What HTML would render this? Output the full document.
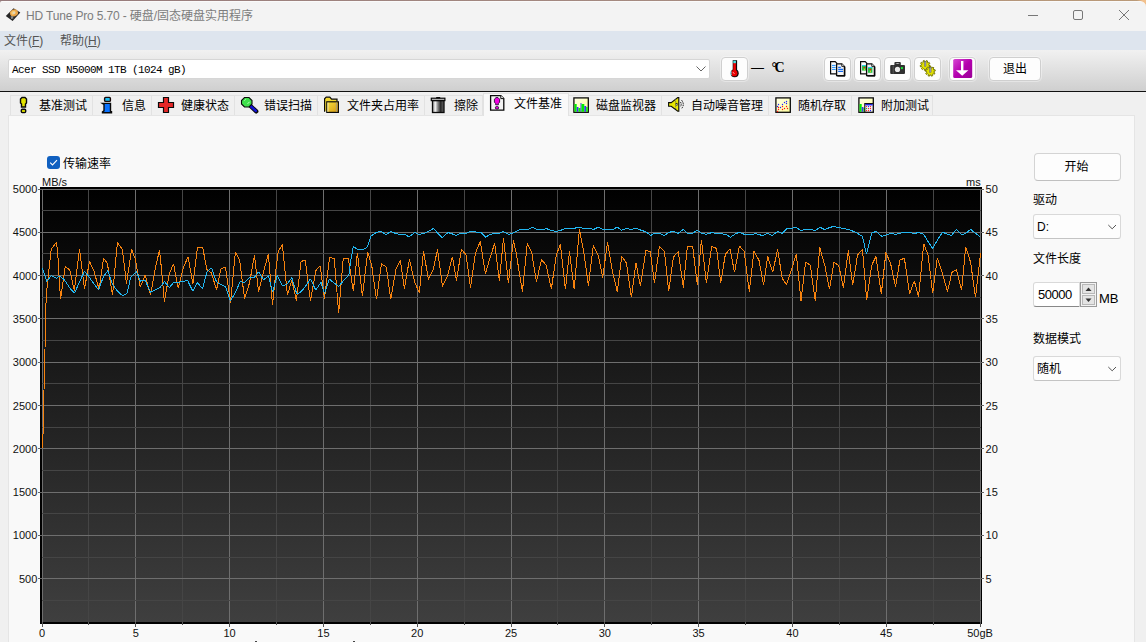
<!DOCTYPE html>
<html lang="zh-CN">
<head>
<meta charset="utf-8">
<title>HD Tune Pro 5.70 - 硬盘/固态硬盘实用程序</title>
<style>
*{box-sizing:border-box;margin:0;padding:0}
html,body{width:1146px;height:642px;overflow:hidden;background:#f0f0f0}
body{position:relative;font-family:"Liberation Sans","Noto Sans CJK SC",sans-serif;font-size:12px;color:#000}
.abs{position:absolute}
#topedge{left:0;top:0;width:1146px;height:8px;background:linear-gradient(to right,#957a7c,#a68b80 60%,#ba9a78 99.2%,#f2c08c 99.7%)}
#titlebar{left:0;top:1px;width:1146px;height:30px;background:#f3f3f3;border-top:1px solid #fafafa;border-radius:2px 6px 0 0}
#title{left:26px;top:8px;font-size:12px;line-height:16px;color:#7d7d7d;white-space:nowrap}
#menubar{left:0;top:31px;width:1146px;height:19px;background:#dee5ee}
.menu{top:33px;line-height:16px;color:#555;white-space:nowrap}
#toolbar{left:0;top:50px;width:1146px;height:41px;background:linear-gradient(#f1f1f1,#cfcfcf)}
#tbline{left:0;top:91px;width:1146px;height:1px;background:#111}
#combo{left:8px;top:59px;width:702px;height:20px;background:#fff;border:1px solid #d6d6d6;border-radius:2px}
#combotext{left:12px;top:63px;font-family:"Liberation Mono",monospace;font-size:11px;line-height:14px;letter-spacing:-0.6px;white-space:nowrap}
.tbtn{top:57px;width:27px;height:24px;background:#fdfdfd;border:1px solid #cfcfcf;border-radius:4px;box-shadow:0 0 0 1px rgba(255,255,255,.35)}
.tab{top:95px;height:21px;border:1px solid #e2e2e2;border-bottom:none;border-left:none;background:#f0f0f0;white-space:nowrap}
.tab span{position:absolute;top:2px;line-height:16px;font-size:12px}
.tab svg{position:absolute;top:2px}
.tab.sel{top:93px;height:23px;background:#f9f9f9;border-left:1px solid #e2e2e2}
.tab.sel span{top:2px}
#panel{left:8px;top:115px;width:1127px;height:530px;background:#f9f9f9;border:1px solid #e5e5e5}
.lbl{white-space:nowrap;line-height:14px;font-size:12px}
.sel2{left:1033px;width:88px;height:25px;background:#fdfdfd;border:1px solid #d9d9d9;border-bottom-color:#c4c4c4;border-radius:3px}
</style>
</head>
<body>
<div id="topedge" class="abs"></div>
<div id="titlebar" class="abs"></div>
<svg class="abs" style="left:0;top:0" width="30" height="30" viewBox="0 0 30 30">
<polygon points="13.6,8.2 20.3,12.4 12.6,21 5.8,16.1" fill="#262626"/>
<ellipse cx="14" cy="12.900" rx="4.100" ry="3.400" fill="#eaa548" transform="rotate(-25 14 12.900)"/>
<ellipse cx="13.600" cy="12.500" rx="2.300" ry="1.800" fill="#f6cf7c" transform="rotate(-25 14 12.900)"/>
<circle cx="14" cy="12.900" r=".9" fill="#d8d8d8"/>
<polygon points="10.600,16.600 13,16 13.400,18.600 11.200,19" fill="#8c8c8c"/>
</svg>
<div id="title" class="abs"><span style="letter-spacing:-0.16px">HD Tune Pro 5.70 - </span>硬盘/固态硬盘实用程序</div>
<svg class="abs" style="left:1020px;top:5px" width="120" height="22" viewBox="0 0 120 22" fill="none" stroke="#777" stroke-width="1">
<line x1="8" y1="10.5" x2="18" y2="10.5"/>
<rect x="53.5" y="5.5" width="9" height="9" rx="1.5"/>
<path d="M99 5 L109 15 M109 5 L99 15"/>
</svg>
<div id="menubar" class="abs"></div>
<div class="abs menu" style="left:4px">文件(<u>F</u>)</div>
<div class="abs menu" style="left:60px">帮助(<u>H</u>)</div>
<div id="toolbar" class="abs"></div>
<div id="tbline" class="abs"></div>
<div id="combo" class="abs"></div>
<div id="combotext" class="abs">Acer SSD N5000M 1TB (1024 gB)</div>
<svg class="abs" style="left:695px;top:65px" width="12" height="8" viewBox="0 0 12 8" fill="none" stroke="#666" stroke-width="1"><path d="M1.5 1.5 L6 6 L10.5 1.5"/></svg>

<!-- toolbar buttons -->
<div class="abs tbtn" style="left:721px"></div>
<div class="abs lbl" style="left:751px;top:61px;font-size:13px">— </div>
<div class="abs lbl" style="left:771.5px;top:60.5px;font-family:'Liberation Serif',serif;font-size:14px;font-weight:bold;letter-spacing:-2.6px">°C</div>
<div class="abs tbtn" style="left:824px"></div>
<div class="abs tbtn" style="left:854px"></div>
<div class="abs tbtn" style="left:884px"></div>
<div class="abs tbtn" style="left:914px"></div>
<div class="abs tbtn" style="left:949px"></div>
<div class="abs tbtn" style="left:989px;width:52px;text-align:center;line-height:22px;font-size:12px">退出</div>

<!-- tabs -->
<div class="abs tab" style="left:10px;width:83px;border-left:1px solid #e2e2e2"><span style="left:28px">基准测试</span></div>
<div class="abs tab" style="left:93px;width:59px"><span style="left:29px">信息</span></div>
<div class="abs tab" style="left:152px;width:83px"><span style="left:29px">健康状态</span></div>
<div class="abs tab" style="left:235px;width:83px"><span style="left:29px">错误扫描</span></div>
<div class="abs tab" style="left:318px;width:107px"><span style="left:29px">文件夹占用率</span></div>
<div class="abs tab" style="left:425px;width:58px"><span style="left:29px">擦除</span></div>
<div class="abs tab" style="left:569px;width:93px"><span style="left:27px">磁盘监视器</span></div>
<div class="abs tab" style="left:662px;width:107px"><span style="left:29px">自动噪音管理</span></div>
<div class="abs tab" style="left:769px;width:83px"><span style="left:29px">随机存取</span></div>
<div class="abs tab" style="left:852px;width:81px"><span style="left:29px">附加测试</span></div>
<div id="panel" class="abs"></div>
<div class="abs tab sel" style="left:483px;width:86px"><span style="left:30px">文件基准</span></div>

<svg class="abs" style="left:0;top:0" width="1146" height="130" viewBox="0 0 1146 130">
<defs>
<linearGradient id="gY" x1="0" y1="0" x2="1" y2="1"><stop offset="0" stop-color="#f6e040"/><stop offset="1" stop-color="#d89a10"/></linearGradient>
<linearGradient id="gT" x1="0" y1="0" x2="1" y2="0"><stop offset="0" stop-color="#8a8a8a"/><stop offset=".25" stop-color="#f2f2f2"/><stop offset=".45" stop-color="#8c8c8c"/><stop offset=".7" stop-color="#2a2a2a"/><stop offset="1" stop-color="#6a6a6a"/></linearGradient>
<linearGradient id="gM" x1="0" y1="0" x2="1" y2="1"><stop offset="0" stop-color="#d848d4"/><stop offset=".5" stop-color="#b400ae"/><stop offset="1" stop-color="#9a0096"/></linearGradient>
<linearGradient id="gP" x1="0" y1="0" x2="1" y2="1"><stop offset="0" stop-color="#ffffe8"/><stop offset="1" stop-color="#ffff9a"/></linearGradient>
</defs>
<!-- tab 1: exclamation -->
<path d="M22 97.5 h3 l1.5 1.5 v4 l-1 1 v3 h-4 v-3 l-1 -1 v-4 z" fill="#e2e200" stroke="#0a0a0a" stroke-width="1.400"/>
<rect x="21.3" y="109.3" width="4.4" height="3.3" rx="1" fill="#d0d000" stroke="#0a0a0a" stroke-width="1.400"/>
<!-- tab 2: info -->
<rect x="104.6" y="97.4" width="5.8" height="4" rx="1" fill="#1cc0f4" stroke="#1a0a0a" stroke-width="1.400"/>
<path d="M103.5 103.4 h7 v8.4 h1 v1 h-9 v-1 l1.5 -1 v-6.4 l-1.5 -1 z" fill="#0a72ff" stroke="#0a0a0a" stroke-width="1.400"/>
<!-- tab 3: red cross -->
<path d="M163.5 97.5 h5 v5 h5 v5 h-5 v5 h-5 v-5 h-5 v-5 h5 z" fill="#e52828" stroke="#0a0a0a" stroke-width="1.2"/>
<!-- tab 4: magnifier -->
<path d="M250 105.5 L256.3 111.4" stroke="#0a0a0a" stroke-width="4.2" stroke-linecap="round"/>
<path d="M250.5 106 L255.8 110.9" stroke="#1414d8" stroke-width="2.4" stroke-linecap="round"/>
<path d="M244.5 97.5 h4.5 l3 3 v3.5 l-3 3 h-4.5 l-3 -3 v-3.5 z" fill="#3ee04a" stroke="#0a0a0a" stroke-width="1.1"/>
<path d="M244.5 100.6 l1.2 -1.2 M247.6 103.8 l2 -2" stroke="#d8ffd8" stroke-width="0.9"/>
<!-- tab 5: folder -->
<path d="M324.6 111.8 v-13 l1.6 -1.6 h3.6 l1.8 2 h5.4 v2.3" fill="#f2d830" stroke="#0a0a0a" stroke-width="1.2"/>
<rect x="326.8" y="101.8" width="11.6" height="10.6" fill="url(#gY)" stroke="#0a0a0a" stroke-width="1.2"/>
<line x1="327.9" y1="102.6" x2="327.9" y2="111.8" stroke="#fff8c0" stroke-width="0.9"/>
<line x1="336.4" y1="102.6" x2="336.4" y2="111.8" stroke="#a09880" stroke-width="0.9"/>
<!-- tab 6: trash -->
<rect x="432.5" y="100.5" width="11.5" height="12" fill="url(#gT)" stroke="#0a0a0a" stroke-width="1.3"/>
<rect x="431.3" y="98.2" width="13.6" height="2.4" fill="#b0b0b0" stroke="#0a0a0a" stroke-width="1.2"/>
<rect x="436.2" y="97" width="4" height="1.4" fill="#0a0a0a"/>
<!-- tab 7: doc with ! -->
<path d="M490.6 95.6 h10.2 l3 3 v11.6 h-13.2 z" fill="#f4f4f4" stroke="#0a0a0a" stroke-width="1.3"/>
<path d="M500.8 95.6 v3 h3" fill="#fff" stroke="#0a0a0a" stroke-width="1"/>
<path d="M496 97.6 h2 l1.6 1.6 v3 l-1.2 1.2 v1.4 h-2.8 v-1.4 l-1.2 -1.2 v-3 z" fill="#f000e0" stroke="#201030" stroke-width="0.9"/>
<rect x="495.4" y="106.6" width="3.2" height="2.4" rx="1" fill="#f000e0" stroke="#201030" stroke-width="0.9"/>
<!-- tab 8: monitor -->
<rect x="573.9" y="97.9" width="14.4" height="14.4" fill="url(#gP)" stroke="#0a0a0a" stroke-width="1.3"/>
<rect x="574.5" y="104" width="2.2" height="7.7" fill="#00f000"/>
<rect x="576.7" y="107" width="1.8" height="4.7" fill="#3838f0"/>
<rect x="578.5" y="108" width="2" height="3.7" fill="#00f000"/>
<rect x="580.5" y="103" width="1" height="8.7" fill="#3838f0"/>
<rect x="581.5" y="104" width="2.8" height="7.7" fill="#00f000"/>
<rect x="584.3" y="106" width="1.9" height="5.7" fill="#3838f0"/>
<rect x="586.2" y="107" width="1.5" height="4.7" fill="#00f000"/>
<!-- tab 9: speaker -->
<path d="M668.6 102.6 h2.6 l6.6 -5 h1 v13.6 h-1 l-6.6 -5 h-2.6 z" fill="#e6e600" stroke="#0a0a0a" stroke-width="1.1"/>
<path d="M675.6 99 v10" stroke="#555" stroke-width="0.8" stroke-dasharray="1.2 1"/>
<rect x="676" y="103.2" width="1.2" height="2.4" fill="#ddd" stroke="#111" stroke-width="0.5"/>
<path d="M680.4 102 q1.6 2.3 0 4.8 M681.6 100.2 q3.4 4.2 0 8.4" fill="none" stroke="#0a0a0a" stroke-width="1" stroke-dasharray="1.5 0.9"/>
<!-- tab 10: scatter -->
<rect x="775.9" y="97.9" width="14.4" height="14.4" fill="url(#gP)" stroke="#0a0a0a" stroke-width="1.3"/>
<g fill="#2020ff"><circle cx="778.5" cy="104.5" r=".7"/><circle cx="777.5" cy="106.5" r=".7"/><circle cx="780.5" cy="107.5" r=".7"/><circle cx="782.5" cy="104.5" r=".7"/><circle cx="784.5" cy="102.5" r=".7"/><circle cx="786.5" cy="101.5" r=".7"/><circle cx="786.5" cy="103.5" r=".7"/></g>
<g fill="#ff1010"><circle cx="778.5" cy="107.5" r=".7"/><circle cx="778.5" cy="109.5" r=".7"/><circle cx="777.5" cy="111.5" r=".7"/><circle cx="782.5" cy="106.5" r=".7"/><circle cx="782.5" cy="109.5" r=".7"/><circle cx="784.5" cy="108.5" r=".7"/><circle cx="786.5" cy="106.5" r=".7"/><circle cx="787.5" cy="108.5" r=".7"/></g>
<!-- tab 11: extra -->
<rect x="858.9" y="97.9" width="14.4" height="14.4" fill="url(#gP)" stroke="#0a0a0a" stroke-width="1.3"/>
<rect x="859.5" y="104" width="2.2" height="7.7" fill="#00f000"/>
<rect x="861.7" y="107" width="1.8" height="4.7" fill="#3838f0"/>
<rect x="863.5" y="108" width="1.2" height="3.7" fill="#00f000"/>
<rect x="864.8" y="103.6" width="8.4" height="8.6" fill="#f4f4f4" stroke="#0a0a0a" stroke-width="1.1"/>
<rect x="865.3" y="104.1" width="7.4" height="1.3" fill="#1010e0"/>
<g fill="#ff1010"><circle cx="866.5" cy="106.6" r=".65"/><circle cx="870.5" cy="106.6" r=".65"/><circle cx="868.5" cy="108.6" r=".65"/><circle cx="870.5" cy="108.6" r=".65"/><circle cx="866.5" cy="110.6" r=".65"/><circle cx="868.5" cy="110.6" r=".65"/></g>
<g fill="#1010ff"><circle cx="868.5" cy="106.6" r=".65"/><circle cx="870.5" cy="110.6" r=".65"/></g>
<circle cx="866.5" cy="108.6" r=".65" fill="#10a020"/>

<!-- toolbar: thermometer -->
<rect x="732.7" y="60.2" width="4.400" height="12" fill="#0a0a0a"/>
<circle cx="734.7" cy="73.2" r="4" fill="#0a0a0a"/>
<rect x="733.3" y="62.8" width="2.600" height="9" fill="#ee0000"/>
<circle cx="734.3" cy="73.200" r="3.100" fill="#e80000"/>
<rect x="733.3" y="60.8" width="2.600" height="2.400" fill="#48e4e4"/>
<path d="M731.3 71.400 a3.300 3.300 0 0 0 0 3.600" stroke="#78e4ec" stroke-width="1.200" fill="none"/>
<path d="M733.2 72.400 l1 1.200" stroke="#fff" stroke-width="1"/>
<!-- dash -->
<!-- copy text icon -->
<path d="M830.6 61.6 h4.6 l1.6 1.6 v10.6 h-6.2 z" fill="#fafafa" stroke="#0a0a0a" stroke-width="1.2"/>
<path d="M832 65.4 h3.6 M832 67.4 h3.6 M832 69.4 h3.6" stroke="#1890ff" stroke-width="1"/>
<path d="M836.6 63.8 h5.2 l2.6 2.6 v9.2 h-7.8 z" fill="#f4f4f4" stroke="#0a0a0a" stroke-width="1.3"/>
<path d="M841.8 63.8 v2.6 h2.6" fill="#fff" stroke="#0a0a0a" stroke-width=".9"/>
<path d="M838.2 67.4 h2.6 M838.2 69.4 h4.8 M838.2 71.4 h4.8" stroke="#1068f0" stroke-width="1.1"/>
<path d="M844.9 66.6 v9.5 h-7.6" fill="none" stroke="#0a0a0a" stroke-width="1"/>
<!-- copy image icon -->
<path d="M860.6 61.6 h4.6 l1.6 1.6 v10.6 h-6.2 z" fill="#fafafa" stroke="#0a0a0a" stroke-width="1.2"/>
<rect x="862" y="65" width="4.4" height="5.6" fill="#28c848"/><rect x="862" y="65" width="4.4" height="1" fill="#30c8f0"/><circle cx="864.4" cy="67.6" r=".9" fill="#e81818"/><rect x="864" y="68.6" width="1" height="1.6" fill="#e0d020"/>
<path d="M866.6 63.8 h5.2 l2.6 2.6 v9.2 h-7.8 z" fill="#f0f0f0" stroke="#0a0a0a" stroke-width="1.3"/>
<path d="M871.8 63.8 v2.6 h2.6" fill="#fff" stroke="#0a0a0a" stroke-width=".9"/>
<rect x="868" y="67" width="4.4" height="5.8" fill="#28c848"/><rect x="868" y="67" width="4.4" height="1" fill="#30c8f0"/><circle cx="870.4" cy="69.6" r=".9" fill="#e81818"/><rect x="870" y="70.6" width="1" height="1.6" fill="#e0d020"/>
<path d="M874.9 66.6 v9.5 h-7.6" fill="none" stroke="#0a0a0a" stroke-width="1"/>
<!-- camera -->
<path d="M890.2 66 q0 -1 1 -1 h3.2 v-2 q0 -.9 .9 -.9 h4.6 q.9 0 .9 .9 v2 h3.2 q1 0 1 1 v7 q0 1 -1 1 h-12.8 q-1 0 -1 -1 z" fill="#303030"/>
<path d="M895.4 64 q2.200 -1.600 4.400 0 z" fill="#f0f0f0"/>
<line x1="893.2" y1="65.400" x2="893.2" y2="73.600" stroke="#777" stroke-width=".6"/>
<circle cx="897.5" cy="69.4" r="2.600" fill="#ececec"/>
<rect x="900.9" y="67.100" width="2" height="2" fill="#18e838"/>
<!-- gears -->
<g fill="#e2e200" stroke="#6e6e00" stroke-width=".9" stroke-linejoin="round">
<path d="M930.19 65.70 L929.91 67.07 L928.59 66.87 L928.06 67.75 L928.83 68.84 L927.74 69.71 L926.85 68.71 L925.88 69.04 L925.77 70.37 L924.38 70.33 L924.34 69.00 L923.38 68.62 L922.44 69.57 L921.40 68.65 L922.23 67.60 L921.74 66.70 L920.41 66.82 L920.20 65.45 L921.51 65.18 L921.71 64.17 L920.61 63.41 L921.34 62.22 L922.51 62.86 L923.32 62.21 L922.97 60.93 L924.29 60.48 L924.78 61.72 L925.81 61.75 L926.36 60.54 L927.66 61.05 L927.24 62.31 L928.01 63.00 L929.22 62.42 L929.88 63.65 L928.75 64.35 L928.90 65.37 Z"/>
<path d="M934.98 73.06 L934.31 74.28 L933.11 73.71 L932.33 74.39 L932.75 75.66 L931.45 76.16 L930.90 74.95 L929.87 74.98 L929.38 76.21 L928.06 75.77 L928.41 74.48 L927.61 73.84 L926.43 74.47 L925.71 73.28 L926.81 72.53 L926.61 71.52 L925.30 71.24 L925.51 69.87 L926.84 70.00 L927.33 69.09 L926.51 68.04 L927.55 67.12 L928.49 68.07 L929.45 67.70 L929.49 66.37 L930.88 66.33 L930.98 67.66 L931.96 67.99 L932.85 67.00 L933.94 67.87 L933.16 68.95 L933.70 69.83 L935.02 69.64 L935.29 71.01 L934.00 71.34 L933.84 72.36 Z"/>
</g>
<rect x="924.4" y="61.4" width="1.600" height="4.800" fill="#9a9ab4" stroke="#50506a" stroke-width=".4"/>
<rect x="929.5" y="67.4" width="1.600" height="4.800" fill="#9a9ab4" stroke="#50506a" stroke-width=".4"/>
<!-- magenta arrow -->
<rect x="953.2" y="59" width="19" height="19" rx="1.500" fill="url(#gM)"/>
<path d="M961 61 h2.400 v9.200 h5 l-6.200 5.600 -6.200 -5.600 h5 z" fill="#fff"/>
</svg>

<!-- checkbox -->
<div class="abs" style="left:47px;top:156px;width:13px;height:13px;background:#1060c0;border-radius:3px"></div>
<svg class="abs" style="left:47px;top:156px" width="13" height="13" viewBox="0 0 13 13" fill="none" stroke="#fff" stroke-width="1.1"><path d="M3.2 6.7 L5.5 9 L10 4.2"/></svg>
<div class="abs lbl" style="left:63px;top:157px">传输速率</div>

<svg class="abs" style="left:0;top:0" width="1146" height="642" viewBox="0 0 1146 642">
<defs><linearGradient id="bg" x1="0" y1="0" x2="0" y2="1"><stop offset="0" stop-color="#000"/><stop offset="1" stop-color="#3f3f3f"/></linearGradient></defs>
<rect x="40" y="187" width="942" height="437" fill="#000"/>
<rect x="42" y="189" width="939" height="433" fill="url(#bg)"/>
<g shape-rendering="crispEdges">
<line x1="42.5" y1="189" x2="42.5" y2="622" stroke="#6e6e6e"/>
<line x1="88.5" y1="189" x2="88.5" y2="622" stroke="#454545"/>
<line x1="135.5" y1="189" x2="135.5" y2="622" stroke="#6e6e6e"/>
<line x1="182.5" y1="189" x2="182.5" y2="622" stroke="#454545"/>
<line x1="229.5" y1="189" x2="229.5" y2="622" stroke="#6e6e6e"/>
<line x1="276.5" y1="189" x2="276.5" y2="622" stroke="#454545"/>
<line x1="323.5" y1="189" x2="323.5" y2="622" stroke="#6e6e6e"/>
<line x1="370.5" y1="189" x2="370.5" y2="622" stroke="#454545"/>
<line x1="417.5" y1="189" x2="417.5" y2="622" stroke="#6e6e6e"/>
<line x1="464.5" y1="189" x2="464.5" y2="622" stroke="#454545"/>
<line x1="511.5" y1="189" x2="511.5" y2="622" stroke="#6e6e6e"/>
<line x1="557.5" y1="189" x2="557.5" y2="622" stroke="#454545"/>
<line x1="604.5" y1="189" x2="604.5" y2="622" stroke="#6e6e6e"/>
<line x1="651.5" y1="189" x2="651.5" y2="622" stroke="#454545"/>
<line x1="698.5" y1="189" x2="698.5" y2="622" stroke="#6e6e6e"/>
<line x1="745.5" y1="189" x2="745.5" y2="622" stroke="#454545"/>
<line x1="792.5" y1="189" x2="792.5" y2="622" stroke="#6e6e6e"/>
<line x1="839.5" y1="189" x2="839.5" y2="622" stroke="#454545"/>
<line x1="886.5" y1="189" x2="886.5" y2="622" stroke="#6e6e6e"/>
<line x1="933.5" y1="189" x2="933.5" y2="622" stroke="#454545"/>
<line x1="980.5" y1="189" x2="980.5" y2="622" stroke="#6e6e6e"/>
<line x1="42" y1="600.5" x2="981" y2="600.5" stroke="#454545"/>
<line x1="42" y1="578.5" x2="981" y2="578.5" stroke="#6e6e6e"/>
<line x1="42" y1="557.5" x2="981" y2="557.5" stroke="#454545"/>
<line x1="42" y1="535.5" x2="981" y2="535.5" stroke="#6e6e6e"/>
<line x1="42" y1="513.5" x2="981" y2="513.5" stroke="#454545"/>
<line x1="42" y1="492.5" x2="981" y2="492.5" stroke="#6e6e6e"/>
<line x1="42" y1="470.5" x2="981" y2="470.5" stroke="#454545"/>
<line x1="42" y1="448.5" x2="981" y2="448.5" stroke="#6e6e6e"/>
<line x1="42" y1="427.5" x2="981" y2="427.5" stroke="#454545"/>
<line x1="42" y1="405.5" x2="981" y2="405.5" stroke="#6e6e6e"/>
<line x1="42" y1="383.5" x2="981" y2="383.5" stroke="#454545"/>
<line x1="42" y1="362.5" x2="981" y2="362.5" stroke="#6e6e6e"/>
<line x1="42" y1="340.5" x2="981" y2="340.5" stroke="#454545"/>
<line x1="42" y1="318.5" x2="981" y2="318.5" stroke="#6e6e6e"/>
<line x1="42" y1="297.5" x2="981" y2="297.5" stroke="#454545"/>
<line x1="42" y1="275.5" x2="981" y2="275.5" stroke="#6e6e6e"/>
<line x1="42" y1="253.5" x2="981" y2="253.5" stroke="#454545"/>
<line x1="42" y1="232.5" x2="981" y2="232.5" stroke="#6e6e6e"/>
<line x1="42" y1="210.5" x2="981" y2="210.5" stroke="#454545"/>
<line x1="42" y1="189.5" x2="981" y2="189.5" stroke="#6e6e6e"/>
<line x1="42.5" y1="622" x2="42.5" y2="627" stroke="#555"/>
<line x1="88.5" y1="622" x2="88.5" y2="625" stroke="#555"/>
<line x1="135.5" y1="622" x2="135.5" y2="627" stroke="#555"/>
<line x1="182.5" y1="622" x2="182.5" y2="625" stroke="#555"/>
<line x1="229.5" y1="622" x2="229.5" y2="627" stroke="#555"/>
<line x1="276.5" y1="622" x2="276.5" y2="625" stroke="#555"/>
<line x1="323.5" y1="622" x2="323.5" y2="627" stroke="#555"/>
<line x1="370.5" y1="622" x2="370.5" y2="625" stroke="#555"/>
<line x1="417.5" y1="622" x2="417.5" y2="627" stroke="#555"/>
<line x1="464.5" y1="622" x2="464.5" y2="625" stroke="#555"/>
<line x1="511.5" y1="622" x2="511.5" y2="627" stroke="#555"/>
<line x1="557.5" y1="622" x2="557.5" y2="625" stroke="#555"/>
<line x1="604.5" y1="622" x2="604.5" y2="627" stroke="#555"/>
<line x1="651.5" y1="622" x2="651.5" y2="625" stroke="#555"/>
<line x1="698.5" y1="622" x2="698.5" y2="627" stroke="#555"/>
<line x1="745.5" y1="622" x2="745.5" y2="625" stroke="#555"/>
<line x1="792.5" y1="622" x2="792.5" y2="627" stroke="#555"/>
<line x1="839.5" y1="622" x2="839.5" y2="625" stroke="#555"/>
<line x1="886.5" y1="622" x2="886.5" y2="627" stroke="#555"/>
<line x1="933.5" y1="622" x2="933.5" y2="625" stroke="#555"/>
<line x1="980.5" y1="622" x2="980.5" y2="627" stroke="#555"/>
<line x1="38" y1="578.5" x2="42" y2="578.5" stroke="#666"/>
<line x1="981" y1="578.5" x2="984" y2="578.5" stroke="#666"/>
<line x1="38" y1="535.5" x2="42" y2="535.5" stroke="#666"/>
<line x1="981" y1="535.5" x2="984" y2="535.5" stroke="#666"/>
<line x1="38" y1="492.5" x2="42" y2="492.5" stroke="#666"/>
<line x1="981" y1="492.5" x2="984" y2="492.5" stroke="#666"/>
<line x1="38" y1="448.5" x2="42" y2="448.5" stroke="#666"/>
<line x1="981" y1="448.5" x2="984" y2="448.5" stroke="#666"/>
<line x1="38" y1="405.5" x2="42" y2="405.5" stroke="#666"/>
<line x1="981" y1="405.5" x2="984" y2="405.5" stroke="#666"/>
<line x1="38" y1="362.5" x2="42" y2="362.5" stroke="#666"/>
<line x1="981" y1="362.5" x2="984" y2="362.5" stroke="#666"/>
<line x1="38" y1="318.5" x2="42" y2="318.5" stroke="#666"/>
<line x1="981" y1="318.5" x2="984" y2="318.5" stroke="#666"/>
<line x1="38" y1="275.5" x2="42" y2="275.5" stroke="#666"/>
<line x1="981" y1="275.5" x2="984" y2="275.5" stroke="#666"/>
<line x1="38" y1="232.5" x2="42" y2="232.5" stroke="#666"/>
<line x1="981" y1="232.5" x2="984" y2="232.5" stroke="#666"/>
<line x1="38" y1="189.5" x2="42" y2="189.5" stroke="#666"/>
<line x1="981" y1="189.5" x2="984" y2="189.5" stroke="#666"/>
</g>
<polyline fill="none" stroke="#f8830e" stroke-width="1" stroke-linejoin="bevel" shape-rendering="crispEdges" points="42.4,448 43.2,430 44,390 45,350 45.3,313.0 47.1,287.1 51.2,249.1 56.4,242.4 57.6,250.9 60.5,299.3 65.2,266.3 69.9,270.1 74.3,290.6 79.5,249.4 84.5,288.8 89.5,261.4 93.8,270.7 99.1,289.4 103.5,258.4 107.3,263.1 112.5,295.2 117.4,242.4 122.4,249.7 126.5,283.6 131.6,249.4 135.3,259.0 140.3,287.1 145.2,274.8 150.5,295.2 156.0,264.9 159.5,250.3 161.3,267.2 164.4,302.0 169.1,274.2 173.5,263.7 178.2,288.2 183.1,268.4 188.1,256.7 192.9,284.1 197.5,247.6 202.7,247.6 206.8,269.5 211.5,273.0 216.5,290.0 220.8,269.0 225.5,267.2 230.5,302.8 235.4,251.8 239.5,259.6 244.6,298.7 249.5,283.0 254.5,254.9 258.6,292.0 263.5,271.9 268.4,253.8 272.5,305.2 276.0,269.5 278.1,252.0 282.4,244.4 287.4,295.2 291.8,280.1 296.4,300.5 301.1,261.4 305.2,260.2 310.5,301.1 315.7,270.7 320.2,265.8 324.5,298.7 329.5,257.6 334.2,258.4 338.7,312.8 343.2,258.8 348.4,258.8 353.3,291.2 357.4,252.6 362.4,296.4 367.7,251.8 371.8,266.0 376.5,299.3 381.5,263.7 386.4,267.2 390.7,299.3 396.0,269.0 400.4,260.2 404.4,288.8 409.4,259.4 414.7,282.4 419.4,292.7 423.5,251.4 428.5,279.5 433.4,269.0 437.5,249.4 442.5,286.5 447.4,276.0 452.4,256.7 456.5,280.6 461.4,249.4 466.1,254.9 470.5,287.6 475.4,253.2 480.3,241.5 485.4,273.6 490.0,257.9 494.7,243.3 499.4,280.6 503.5,238.0 508.4,283.0 513.4,240.3 516.0,252.1 522.4,291.6 527.3,243.5 531.8,253.0 536.4,281.7 541.5,259.5 546.1,265.3 551.4,288.7 556.3,254.8 560.4,244.3 565.4,289.3 569.5,251.3 574.2,289.3 579.4,229.4 583.8,251.9 588.4,285.7 593.3,245.4 598.4,256.0 602.7,277.6 607.5,242.3 612.4,271.7 617.3,291.6 621.7,256.3 626.4,263.0 631.4,297.4 636.0,263.0 640.4,286.3 645.9,250.5 650.3,251.6 654.5,283.4 659.4,246.6 664.4,251.3 668.7,291.4 673.4,257.1 678.3,251.6 683.3,287.5 687.4,246.6 692.7,246.6 697.3,284.6 701.4,239.6 706.4,283.2 711.7,246.6 716.6,248.4 720.7,282.5 725.4,254.2 730.0,248.9 734.5,272.3 739.4,245.8 744.1,251.3 749.3,291.6 754.0,250.7 756.0,255.1 758.9,260.0 763.6,285.2 767.7,256.5 772.7,272.3 777.6,249.5 782.3,278.7 786.6,284.6 791.6,269.4 796.3,253.6 801.0,300.9 805.6,261.8 810.3,265.3 815.3,300.9 819.7,247.4 824.9,265.9 829.4,289.3 834.0,262.4 838.7,265.3 843.4,287.5 848.3,250.5 852.7,285.2 857.6,254.8 862.5,249.5 866.7,299.8 871.7,265.3 876.0,256.5 881.3,293.9 885.9,252.5 890.6,263.6 895.6,286.9 899.9,260.0 904.4,258.3 909.6,293.9 914.3,280.8 918.6,296.8 923.7,243.7 928.0,254.8 932.7,293.3 937.3,257.7 942.6,274.1 947.5,291.6 951.9,272.3 956.4,269.6 961.6,290.4 965.7,246.6 970.6,262.4 975.5,297.4 980.6,253.3"/>
<polyline fill="none" stroke="#22b6f0" stroke-width="1" stroke-linejoin="bevel" shape-rendering="crispEdges" points="42.4,268.1 46.7,281.5 51.2,275.6 56.4,278.3 59.9,276.0 64.6,280.1 69.9,288.2 74.6,293.1 79.5,281.8 84.5,271.3 89.2,277.1 93.8,283.6 98.7,290.0 103.2,277.1 107.8,270.7 112.5,284.1 117.4,291.2 122.4,295.5 126.9,293.8 130.6,277.7 136.5,271.6 140.3,281.2 145.2,280.3 150.5,292.3 156.0,289.4 160.1,287.6 164.4,281.5 169.4,287.6 173.5,282.6 178.8,282.2 183.1,281.5 187.5,280.3 192.8,291.2 197.5,282.6 202.5,288.8 206.8,272.5 211.5,267.8 216.5,281.8 220.8,284.7 225.5,286.5 230.5,301.1 235.4,292.3 240.1,281.8 244.6,282.4 249.5,277.7 254.5,277.1 258.6,271.9 263.5,280.1 268.4,275.6 272.5,292.3 277.2,275.6 282.4,285.9 287.1,284.1 291.8,277.7 296.8,294.1 301.1,291.7 305.8,285.9 310.5,278.9 315.7,290.0 321.0,282.4 324.5,293.5 329.2,279.1 334.2,283.0 338.7,286.5 343.6,280.4 348.9,274.8 350.6,261.7 353.3,246.3 357.6,249.5 363.5,249.5 367.5,246.8 371.0,236.0 375.7,232.8 380.4,231.1 386.2,234.6 390.9,231.4 395.6,233.5 399.1,234.3 404.9,234.3 409.0,237.0 414.9,232.3 418.9,234.6 423.6,233.5 428.3,231.4 433.5,228.4 438.2,233.7 442.3,237.8 447.9,232.5 451.8,233.7 456.1,235.4 461.1,233.1 465.8,233.5 469.9,231.4 481.0,232.5 485.6,237.2 490.3,234.3 494.4,233.5 499.1,233.5 503.2,231.6 508.4,234.3 511.9,233.7 516.0,231.4 520.1,229.7 528.3,229.4 532.4,227.1 537.0,229.7 543.5,229.4 546.4,228.5 551.0,230.6 556.3,231.4 561.0,230.3 565.1,228.3 574.4,228.3 579.1,227.1 583.2,228.3 590.8,228.5 593.7,229.4 598.4,227.1 603.0,229.4 613.0,229.4 617.1,227.1 621.7,230.3 625.8,228.5 631.1,229.4 636.0,228.3 641.3,230.3 645.9,231.8 650.6,235.5 654.7,233.2 659.4,233.2 664.0,235.7 668.7,232.6 673.4,231.1 678.1,233.4 683.3,229.4 687.4,233.2 692.7,233.2 697.3,230.3 701.4,233.2 706.1,234.3 711.9,232.6 716.6,233.4 726.0,234.3 730.4,237.3 734.7,234.3 739.4,232.2 744.1,234.3 749.3,234.6 756.0,233.8 762.4,235.5 767.7,233.4 772.1,235.5 777.6,231.4 782.3,233.4 786.6,228.7 791.6,228.7 795.7,227.1 801.0,230.6 805.6,229.4 810.3,229.4 815.0,230.6 820.0,227.3 824.9,229.7 829.4,227.6 833.7,226.4 838.4,227.6 843.6,228.5 849.5,229.7 853.5,231.4 858.2,233.8 862.5,236.4 866.4,254.2 871.7,233.2 876.0,231.4 881.8,236.4 886.5,234.9 890.6,233.4 895.3,234.3 902.9,232.6 909.9,232.6 914.0,233.4 919.2,232.6 923.7,234.3 928.0,241.4 932.7,248.4 937.3,240.2 942.6,232.2 947.3,234.3 951.4,235.5 956.4,229.4 961.9,234.6 966.0,233.2 970.6,229.4 975.3,233.2 980.0,236.7"/>
<g font-family="Liberation Sans, sans-serif" font-size="11px" fill="#111">
<text x="37.3" y="582.7" text-anchor="end">500</text>
<text x="985.6" y="582.7">5</text>
<text x="37.3" y="539.4" text-anchor="end">1000</text>
<text x="985.6" y="539.4">10</text>
<text x="37.3" y="496.1" text-anchor="end">1500</text>
<text x="985.6" y="496.1">15</text>
<text x="37.3" y="452.8" text-anchor="end">2000</text>
<text x="985.6" y="452.8">20</text>
<text x="37.3" y="409.5" text-anchor="end">2500</text>
<text x="985.6" y="409.5">25</text>
<text x="37.3" y="366.2" text-anchor="end">3000</text>
<text x="985.6" y="366.2">30</text>
<text x="37.3" y="322.9" text-anchor="end">3500</text>
<text x="985.6" y="322.9">35</text>
<text x="37.3" y="279.6" text-anchor="end">4000</text>
<text x="985.6" y="279.6">40</text>
<text x="37.3" y="236.3" text-anchor="end">4500</text>
<text x="985.6" y="236.3">45</text>
<text x="37.3" y="193.0" text-anchor="end">5000</text>
<text x="985.6" y="193.0">50</text>
<text x="42.0" y="637" text-anchor="middle">0</text>
<text x="135.8" y="637" text-anchor="middle">5</text>
<text x="229.6" y="637" text-anchor="middle">10</text>
<text x="323.4" y="637" text-anchor="middle">15</text>
<text x="417.2" y="637" text-anchor="middle">20</text>
<text x="511.0" y="637" text-anchor="middle">25</text>
<text x="604.8" y="637" text-anchor="middle">30</text>
<text x="698.6" y="637" text-anchor="middle">35</text>
<text x="792.4" y="637" text-anchor="middle">40</text>
<text x="886.2" y="637" text-anchor="middle">45</text>
<text x="980.0" y="637" text-anchor="middle">50gB</text>
<text x="42" y="185.5">MB/s</text>
<text x="966" y="185.5">ms</text>
</g>
</svg>

<!-- right panel -->
<div class="abs" style="left:1034px;top:153px;width:87px;height:28px;background:#fdfdfd;border:1px solid #d4d4d4;border-bottom-color:#c0c0c0;border-radius:4px;text-align:center;line-height:27px;text-indent:-2px;font-size:12px">开始</div>
<div class="abs lbl" style="left:1033px;top:192.5px">驱动</div>
<div class="abs sel2" style="top:214px"><span class="abs" style="left:3px;top:4px;line-height:16px">D:</span></div>
<svg class="abs" style="left:1105px;top:223px" width="12" height="8" viewBox="0 0 12 8" fill="none" stroke="#555" stroke-width="1"><path d="M3.300 2 L7.200 5.800 L11 2"/></svg>
<div class="abs lbl" style="left:1033px;top:252px">文件长度</div>
<div class="abs" style="left:1033px;top:282px;width:47px;height:25px;background:#fff;border:1px solid #d9d9d9;border-bottom:1px solid #888;border-radius:3px 0 0 3px"><span class="abs" style="left:4px;top:3.5px;line-height:16px;font-size:13px;letter-spacing:-0.45px">50000</span></div>
<div class="abs" style="left:1080px;top:282px;width:17px;height:25px;background:#f3f3f3;border:1px solid #9a9a9a"></div>
<div class="abs" style="left:1082px;top:284px;width:13px;height:10px;background:#e4e4e4;border:1px solid #b8b8b8"></div>
<div class="abs" style="left:1082px;top:295px;width:13px;height:10px;background:#e4e4e4;border:1px solid #b8b8b8"></div>
<svg class="abs" style="left:1084px;top:286px" width="9" height="18" viewBox="0 0 9 18"><polygon points="1.5,5 4.5,1.5 7.5,5" fill="#333"/><polygon points="1.5,12.5 4.5,16 7.5,12.5" fill="#333"/></svg>
<div class="abs lbl" style="left:1099px;top:292px;font-size:13px">MB</div>
<div class="abs lbl" style="left:1033px;top:332px">数据模式</div>
<div class="abs sel2" style="top:356px"><span class="abs" style="left:3px;top:4px;line-height:16px">随机</span></div>
<svg class="abs" style="left:1105px;top:365px" width="12" height="8" viewBox="0 0 12 8" fill="none" stroke="#555" stroke-width="1"><path d="M3.300 2 L7.200 5.800 L11 2"/></svg>
<div class="abs" style="left:255px;top:641px;width:2px;height:1px;background:#444"></div>
<div class="abs" style="left:353px;top:641px;width:2px;height:1px;background:#444"></div>
</body>
</html>
